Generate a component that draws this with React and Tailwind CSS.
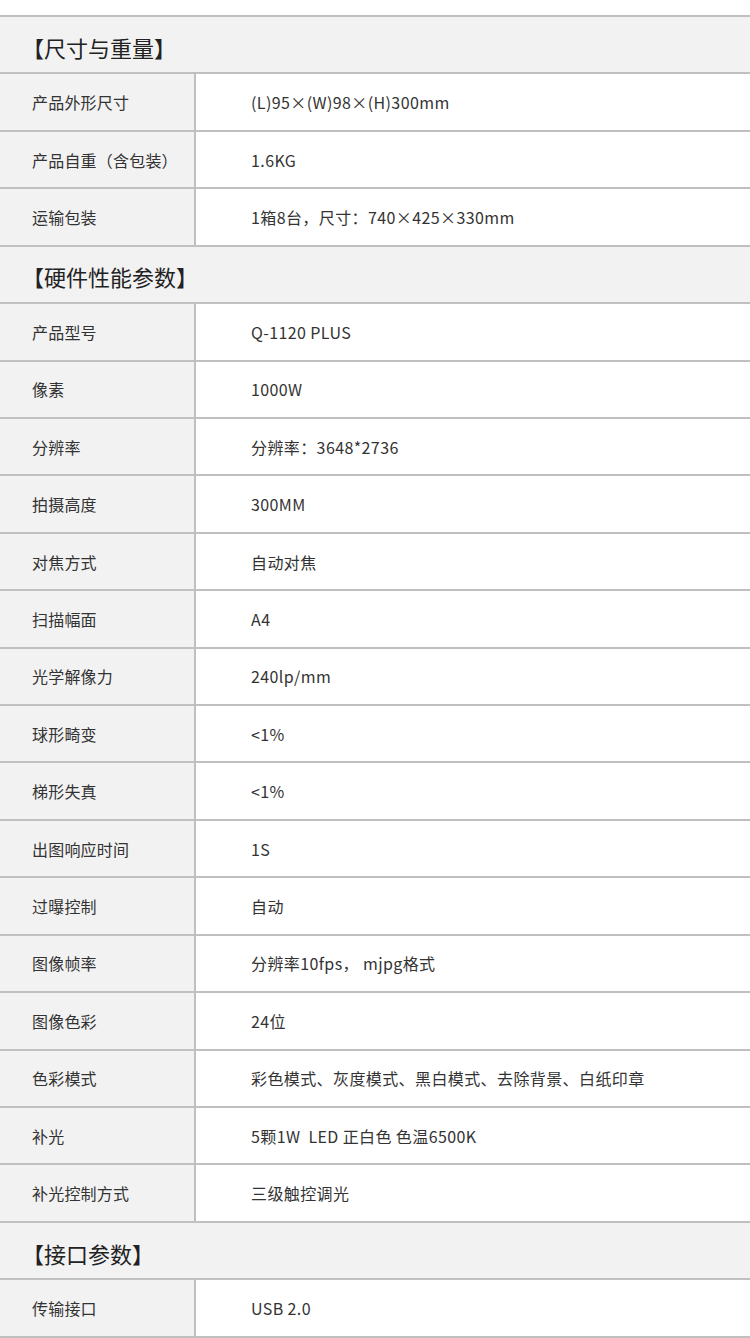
import React from 'react';

const sections = [
  {
    title: '【尺寸与重量】',
    rows: [
      ['产品外形尺寸', '(L)95×(W)98×(H)300mm'],
      ['产品自重（含包装）', '1.6KG'],
      ['运输包装', '1箱8台，尺寸：740×425×330mm'],
    ],
  },
  {
    title: '【硬件性能参数】',
    rows: [
      ['产品型号', 'Q-1120 PLUS'],
      ['像素', '1000W'],
      ['分辨率', '分辨率：3648*2736'],
      ['拍摄高度', '300MM'],
      ['对焦方式', '自动对焦'],
      ['扫描幅面', 'A4'],
      ['光学解像力', '240lp/mm'],
      ['球形畸变', '<1%'],
      ['梯形失真', '<1%'],
      ['出图响应时间', '1S'],
      ['过曝控制', '自动'],
      ['图像帧率', '分辨率10fps， mjpg格式'],
      ['图像色彩', '24位'],
      ['色彩模式', '彩色模式、灰度模式、黑白模式、去除背景、白纸印章'],
      ['补光', '5颗1W  LED 正白色 色温6500K'],
      ['补光控制方式', '三级触控调光'],
    ],
  },
  {
    title: '【接口参数】',
    rows: [['传输接口', 'USB 2.0']],
  },
];

const font = { fontFamily: '"Noto Sans CJK SC", "Noto Sans", sans-serif' };

const SectionHeader = ({ title }) => (
  <div className="h-[57.43px] flex items-center bg-[#f2f2f2] border-b-2 border-[#c0c0c0] pl-[22px] pt-[5px]">
    <span className="text-[22px] text-[#222]">{title}</span>
  </div>
);

const Row = ({ label, value }) => (
  <div className="h-[57.43px] flex border-b-2 border-[#c0c0c0]">
    <div className="w-[196px] shrink-0 flex items-center bg-[#f2f2f2] border-r-2 border-[#c0c0c0] pl-[32px] text-[16px] tracking-[0.2px] text-[#333]">
      {label}
    </div>
    <div className="flex-1 flex items-center pl-[55px] text-[16px] tracking-[0.4px] text-[#333] whitespace-pre">
      {value}
    </div>
  </div>
);

export default function App() {
  return (
    <div className="w-[750px] bg-white pt-[15px]" style={font}>
      <div className="border-t-2 border-[#c0c0c0]">
        {sections.map((s) => (
          <div key={s.title}>
            <SectionHeader title={s.title} />
            {s.rows.map(([l, v]) => (
              <Row key={l} label={l} value={v} />
            ))}
          </div>
        ))}
      </div>
    </div>
  );
}
